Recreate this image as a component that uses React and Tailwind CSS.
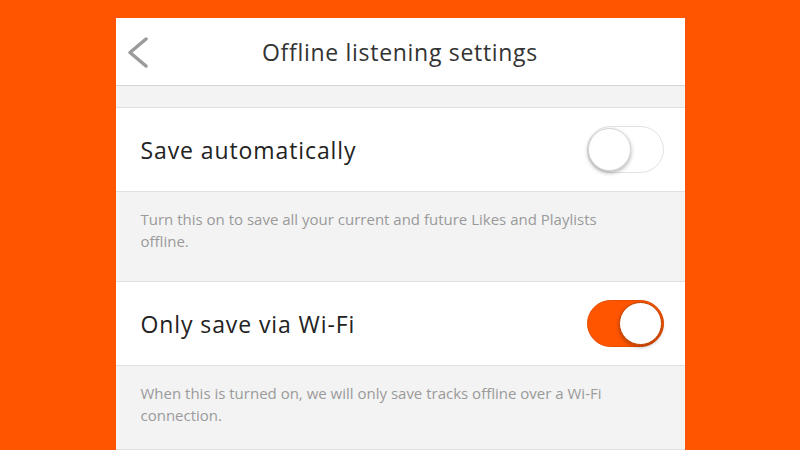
import React, { useState } from "react";

const Toggle = ({ on, onClick }) => (
  <button
    onClick={onClick}
    className={`relative w-[77px] h-[47px] rounded-full border transition-colors ${
      on ? "bg-[#ff5500] border-[#e54d00]" : "bg-white border-[#e2e2e2]"
    }`}
  >
    <span
      className={`absolute top-[1px] w-[43px] h-[43px] rounded-full bg-white shadow-[0_2px_4px_rgba(0,0,0,0.3)] ${
        on ? "right-[1px] border border-[#c44400]" : "left-[0px] border border-[#d6d6d6]"
      }`}
    />
  </button>
);

const SettingRow = ({ label, on, onClick }) => (
  <div className="flex items-center justify-between h-[84px] pl-[25px] pr-[21px] bg-white border-b border-[#e0e0e0]">
    <span className="text-[23px] text-[#222] tracking-[0.9px] pt-[2px]">{label}</span>
    <Toggle on={on} onClick={onClick} />
  </div>
);

const Note = ({ children, height }) => (
  <div
    className={`bg-[#f3f3f3] border-b border-[#e0e0e0] pl-[25px] pr-[40px] pt-[16px] text-[15px] leading-[22px] text-[#9a9a9a] ${height}`}
  >
    {children}
  </div>
);

export default function App() {
  const [auto, setAuto] = useState(false);
  const [wifi, setWifi] = useState(true);

  return (
    <div
      className="w-[800px] h-[450px] bg-[#ff5500] overflow-hidden pt-[18px]"
      style={{ fontFamily: '"Open Sans", "Noto Sans", sans-serif' }}
    >
      <div className="mx-auto w-[569px] h-[432px] bg-[#f3f3f3] flex flex-col">
        <div className="relative flex items-center justify-center h-[68px] bg-white border-b border-[#d4d4d4]">
          <svg
            className="absolute left-[10px] top-[18px]"
            width="24"
            height="32"
            viewBox="0 0 24 32"
            fill="none"
          >
            <path d="M20 3 L4 16.5 L20 30" stroke="#9b9b9b" strokeWidth="3.5" strokeLinecap="round" strokeLinejoin="round" />
          </svg>
          <span className="text-[23px] text-[#333] tracking-[0.7px] pt-[2px]">Offline listening settings</span>
        </div>
        <div className="h-[22px] bg-[#f3f3f3] border-b border-[#e0e0e0]" />
        <SettingRow label="Save automatically" on={auto} onClick={() => setAuto(!auto)} />
        <Note height="h-[90px]">
          Turn this on to save all your current and future Likes and Playlists offline.
        </Note>
        <SettingRow label="Only save via Wi-Fi" on={wifi} onClick={() => setWifi(!wifi)} />
        <Note height="flex-1">
          When this is turned on, we will only save tracks offline over a Wi-Fi connection.
        </Note>
      </div>
    </div>
  );
}
